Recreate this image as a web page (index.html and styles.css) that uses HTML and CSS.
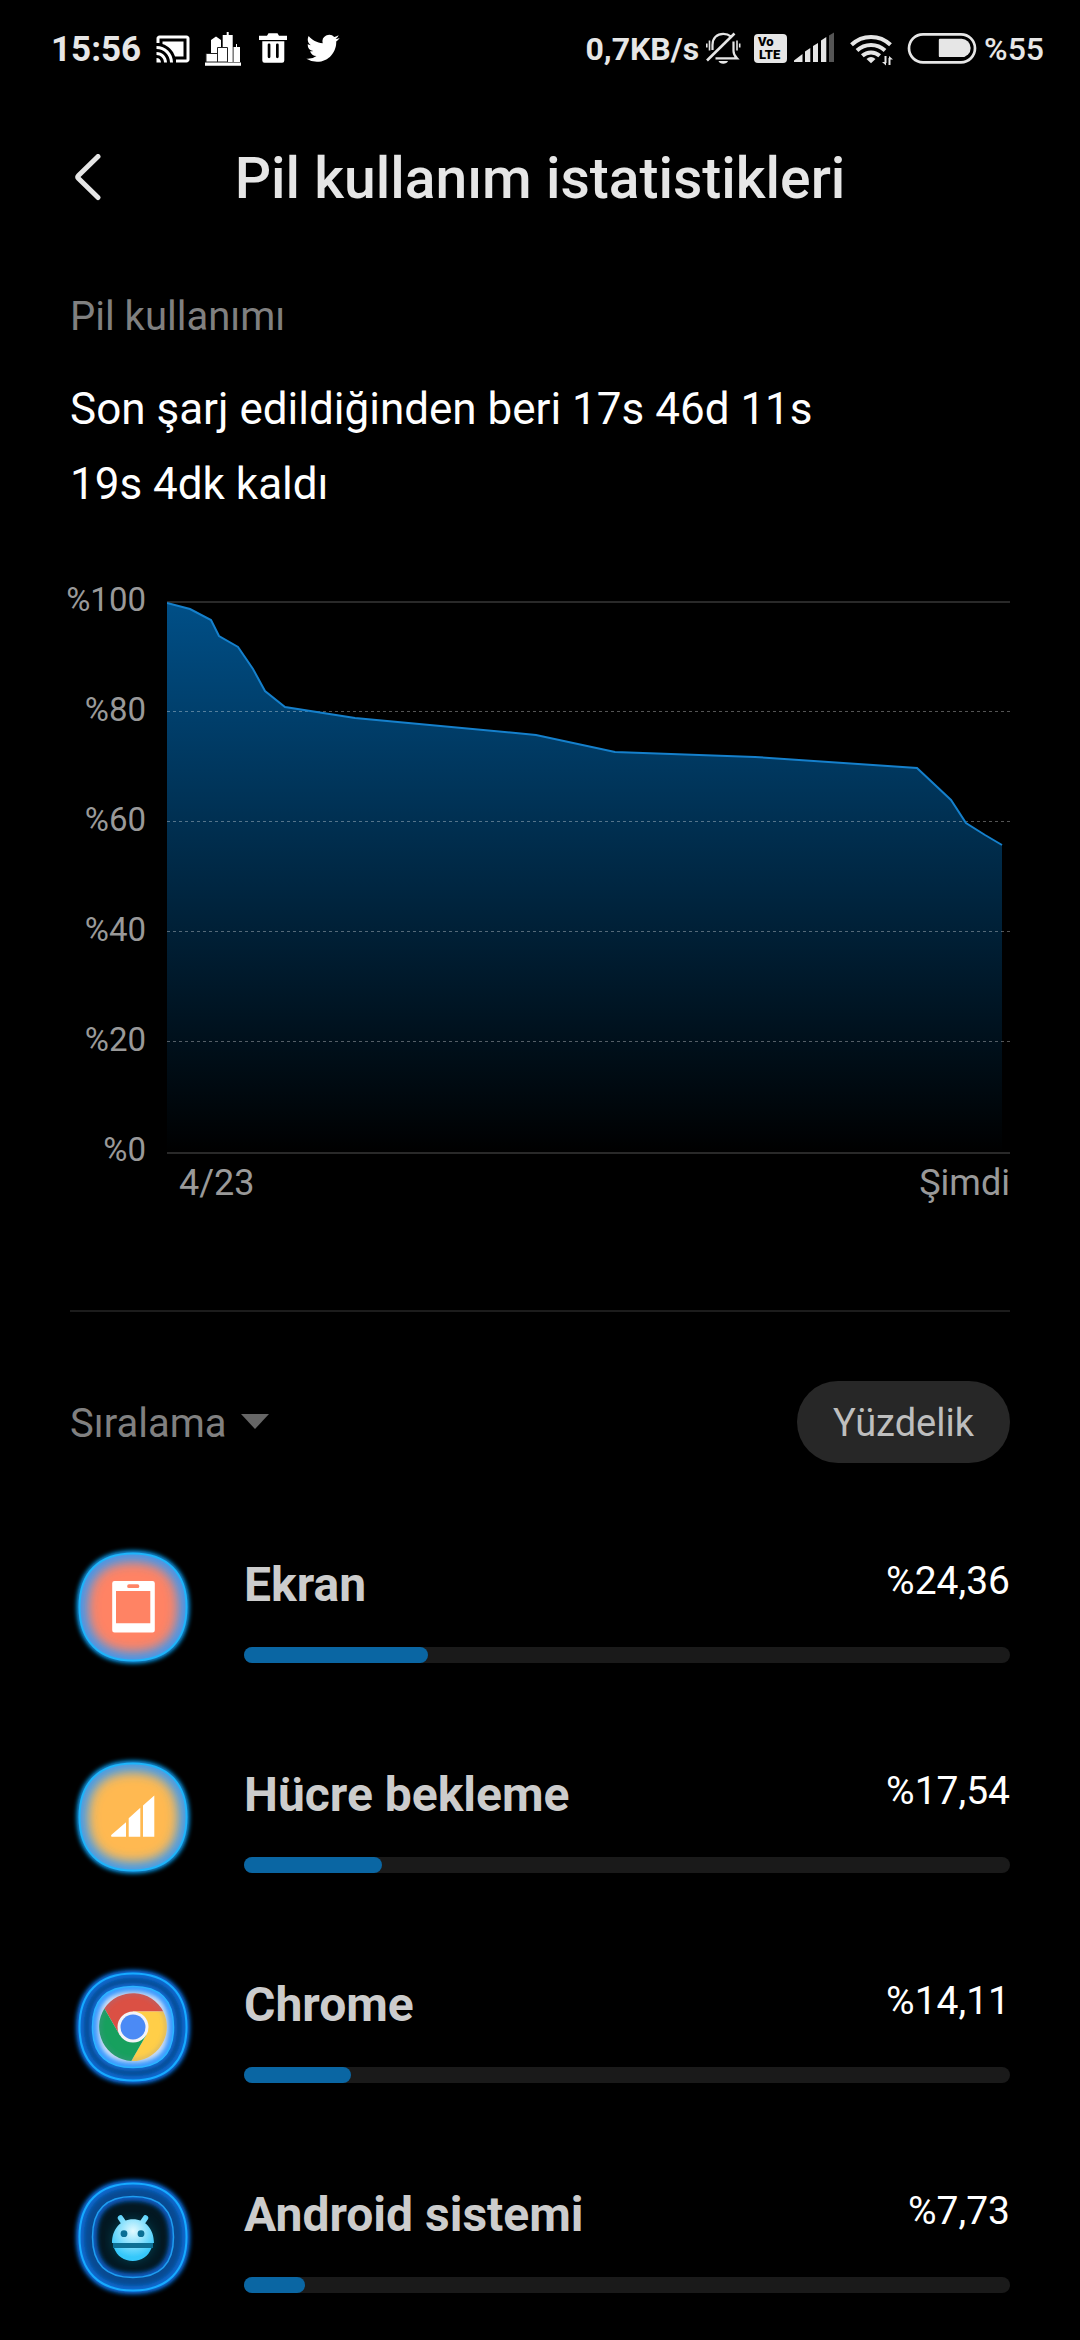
FILE: index.html
```html
<!DOCTYPE html>
<html lang="tr">
<head>
<meta charset="utf-8">
<meta name="viewport" content="width=device-width, initial-scale=1">
<title>Pil kullanım istatistikleri</title>
<link rel="stylesheet" href="styles.css">
</head>
<body>
<svg class="defs" width="0" height="0" aria-hidden="true">
  <defs>
    <path id="squircle" d="M63 9.500C97 9.500 116.500 29 116.500 63S97 116.500 63 116.500 9.500 97 9.500 63 29 9.500 63 9.500Z"/>
    <path id="squircle-inner" d="M63 22.500C90 22.500 103.500 36 103.500 63S90 103.500 63 103.500 22.500 90 22.500 63 36 22.500 63 22.500Z"/>
    <clipPath id="clip-outer"><use href="#squircle"/></clipPath>
    <clipPath id="clip-inner"><use href="#squircle-inner"/></clipPath>
    <filter id="blur-s" x="-20%" y="-20%" width="140%" height="140%"><feGaussianBlur stdDeviation="2"/></filter>
    <filter id="blur-m" x="-20%" y="-20%" width="140%" height="140%"><feGaussianBlur stdDeviation="6"/></filter>
    <radialGradient id="droid" gradientUnits="userSpaceOnUse" cx="63" cy="57" r="26">
      <stop offset="0" stop-color="#e2faff"/><stop offset="1" stop-color="#35c8fb"/>
    </radialGradient>
    <linearGradient id="area" gradientUnits="userSpaceOnUse" x1="0" y1="2" x2="0" y2="552">
      <stop offset="0" stop-color="#004f87"/><stop offset="1" stop-color="#000"/>
    </linearGradient>
  </defs>
</svg>

<header class="status">
  <div class="status-left">
    <span class="clock">15:56</span>
    <svg width="36" height="36" viewBox="0 0 24 24" fill="#fff"><path d="M1 18v3h3c0-1.66-1.34-3-3-3zm0-4v2c2.760 0 5 2.240 5 5h2c0-3.870-3.130-7-7-7zm18-7H5v1.630c3.960 1.280 7.090 4.410 8.370 8.370H19V7zM1 10v2c4.970 0 9 4.030 9 9h2c0-6.080-4.930-11-11-11zm20-7H3c-1.100 0-2 .9-2 2v3h2V5h18v14h-7v2h7c1.100 0 2-.9 2-2V5c0-1.100-.9-2-2-2z"/></svg>
    <svg width="36" height="36" viewBox="0 0 36 36" fill="#fff"><path d="M6 31V9l5-3.500L16 9v22zM17.700 31V4h4V1h2v3h4v27zM28.500 31V16h2.500v-3h1v3h3v15z"/><path d="M1 22.500h11.500V31H1zM12.500 16.500h10V31h-10z" stroke="#222" stroke-width="1"/><path d="M0 31.500h36v3.300H0z"/></svg>
    <svg width="36" height="36" viewBox="0 0 36 36" fill="#fff"><path fill-rule="evenodd" d="M13.500 2.300h9L24 4.700h8V9H4V4.700h8zM7.300 10.200h22v19.300a2.200 2.200 0 0 1-2.200 2.200H9.500a2.200 2.200 0 0 1-2.200-2.200zM14 12.500a1.300 1.300 0 0 0-1.300 1.300v12a1.300 1.300 0 0 0 2.700 0v-12A1.300 1.300 0 0 0 14 12.500zm8.300 0a1.300 1.300 0 0 0-1.300 1.300v12a1.300 1.300 0 0 0 2.700 0v-12a1.300 1.300 0 0 0-1.400-1.300z"/></svg>
    <svg width="36" height="36" viewBox="-1 -0.500 26 26" fill="#fff"><path d="M23.953 4.570a10 10 0 01-2.825.775 4.958 4.958 0 002.163-2.723c-.951.555-2.005.959-3.127 1.184a4.920 4.920 0 00-8.384 4.482C7.690 8.095 4.067 6.130 1.640 3.162a4.822 4.822 0 00-.666 2.475c0 1.710.870 3.213 2.188 4.096a4.904 4.904 0 01-2.228-.616v.060a4.923 4.923 0 003.946 4.827 4.996 4.996 0 01-2.212.085 4.936 4.936 0 004.604 3.417 9.867 9.867 0 01-6.102 2.105c-.39 0-.779-.023-1.170-.067a13.995 13.995 0 007.557 2.209c9.053 0 13.998-7.496 13.998-13.985 0-.21 0-.42-.015-.63A9.935 9.935 0 0024 4.590z"/></svg>
  </div>
  <div class="status-right">
    <span class="rate">0,7KB/s</span>
    <svg width="36" height="36" viewBox="0 0 36 36" fill="none" stroke="#e6e6e6" stroke-width="2.200"><path d="M7.500 19v-5C7.500 7 12 2.800 18.300 2.800c3 0 5.500.9 7.400 2.600M28.500 10.500V20c0 3 1.200 5 3.500 7.300H10.500"/><path d="M2 29.500 29.500 2.500" stroke-width="2.600"/><path d="M1.800 12.500v4M4.500 9.500v10M32 9.500v10M34.700 12.500v4" stroke-width="1.600"/><path d="M13.500 30h9.500a5 4 0 0 1-9.500 0z" fill="#e6e6e6" stroke="none"/></svg>
    <svg width="41" height="36" viewBox="0 0 41 36"><rect x="7" y="3" width="33" height="29" rx="4" fill="#e6e6e6"/><text x="11" y="15" class="volte">Vo</text><text x="12" y="28" class="volte">LTE</text></svg>
    <svg width="42" height="36" viewBox="0 0 42 36" fill="#e6e6e6"><path d="M0 31v-1.500L8.500 23v8zM11 31V20.500l5.300-3.500v14zM19 31V15l5-3v19zM27 31V9.500l5.300-3.500v25z"/><path fill="#555" d="M35 31V4.500l5-3V31z"/></svg>
    <svg width="58" height="36" viewBox="0 0 58 36" fill="none" stroke="#e6e6e6" stroke-width="4"><path d="M9.500 13.800a28 28 0 0 1 39 0M15 19.500a20.500 20.500 0 0 1 28 0M20.300 24.800a13 13 0 0 1 17.400 0"/><path d="M29 32.300 24.500 28q4.500-4 9 0z" fill="#e6e6e6" stroke="none"/><path d="M43.500 25v7M47.500 27v7" stroke-width="2"/><path d="M40 31h4v3.500zM51 28.500h-4V25z" fill="#e6e6e6" stroke="none"/></svg>
    <svg width="72" height="36" viewBox="0 0 72 36"><rect x="3" y="3.300" width="66" height="28" rx="14" fill="none" stroke="#e6e6e6" stroke-width="2.700"/><path fill="#e6e6e6" d="M34 7.700h21.500a9.200 9.200 0 0 1 0 18.400H34a1.200 1.200 0 0 1-1.200-1.200v-16A1.200 1.200 0 0 1 34 7.700z"/></svg>
    <span class="charge">%55</span>
  </div>
</header>

<nav class="titlebar">
  <button class="back" type="button" aria-label="Geri"><svg width="28" height="48" viewBox="0 0 28 48" fill="none" stroke="#e6e6e6" stroke-width="5" stroke-linecap="round" stroke-linejoin="round"><path d="M24 2.500 4.500 21.500q-1.500 1.500 0 3L24 43.500"/></svg></button>
  <h1 class="title">Pil kullanım istatistikleri</h1>
</nav>

<main class="content">
  <h2 class="section">Pil kullanımı</h2>
  <p class="summary">Son şarj edildiğinden beri 17s 46d 11s<br>19s 4dk kaldı</p>

  <figure class="chart">
    <div class="y-axis"><span>%100</span><span>%80</span><span>%60</span><span>%40</span><span>%20</span><span>%0</span></div>
    <div class="plot-col">
      <svg class="plot" viewBox="0 0 843 553" preserveAspectRatio="none" role="img" aria-label="Pil düzeyi">
        <path fill="#292929" d="M0 0h843v2H0zM0 551h843v2H0z"/>
        <path fill="url(#area)" d="M0 2 23 8 44 19 52 35 71 46 86 68 98 90 118 106 188 117 369 134 448 151 588 156 750 167 784 199 799 222 818 234 835 244V551H0z"/>
        <path fill="none" stroke="#fff" stroke-opacity=".33" stroke-dasharray="3 3" d="M0 110.500h843M0 220.500h843M0 330.500h843M0 440.500h843"/>
        <path fill="none" stroke="#1580cc" stroke-width="2" d="M0 2 23 8 44 19 52 35 71 46 86 68 98 90 118 106 188 117 369 134 448 151 588 156 750 167 784 199 799 222 818 234 835 244"/>
      </svg>
      <div class="x-axis"><span>4/23</span><span>Şimdi</span></div>
    </div>
  </figure>

  <hr class="divider">

  <div class="toolbar">
    <label class="sort">
      <select class="sort-select" aria-label="Sıralama"><option>Sıralama</option></select>
      <svg width="28" height="16" viewBox="0 0 28 16" fill="#666"><path d="M0 0h28L14 15z"/></svg>
    </label>
    <button class="mode" type="button">Yüzdelik</button>
  </div>

  <ul class="apps">
    <li class="app">
      <svg class="app-icon" viewBox="0 0 126 126">
        <use href="#squircle" fill="none" stroke="#0f9cf0" stroke-width="6" filter="url(#blur-s)"/>
        <g clip-path="url(#clip-outer)"><use href="#squircle" fill="#ff8364"/><use href="#squircle" fill="none" stroke="#3598f5" stroke-width="16" filter="url(#blur-m)"/></g>
        <use href="#squircle" fill="none" stroke="#1fb4fa" stroke-width="2"/>
        <path fill="#fff" fill-rule="evenodd" d="M44.500 37h38a2.300 2.300 0 0 1 2.300 2.300v47a2.300 2.300 0 0 1-2.300 2.300h-38a2.300 2.300 0 0 1-2.300-2.300v-47A2.300 2.300 0 0 1 44.500 37zM46 47v32.300h34.300V47zM59 40.300a1.800 1.800 0 0 0 0 3.700h8.500a1.800 1.800 0 0 0 0-3.700z"/>
      </svg>
      <div class="app-body">
        <div class="app-head"><span class="app-name">Ekran</span><span class="app-value">%24,36</span></div>
        <div class="bar"><div class="bar-fill" style="width:24%"></div></div>
      </div>
    </li>
    <li class="app">
      <svg class="app-icon" viewBox="0 0 126 126">
        <use href="#squircle" fill="none" stroke="#0f9cf0" stroke-width="6" filter="url(#blur-s)"/>
        <g clip-path="url(#clip-outer)"><use href="#squircle" fill="#ffb951"/><use href="#squircle" fill="none" stroke="#3598f5" stroke-width="16" filter="url(#blur-m)"/></g>
        <use href="#squircle" fill="none" stroke="#1fb4fa" stroke-width="2"/>
        <path fill="#fff" d="M41.500 82.700q-1-1 0-2L56 68.300v14.400zM58.700 82.700V64.300l11.600-10.600v29zM73 82.700V51.500l11.300-10v41.200z"/>
      </svg>
      <div class="app-body">
        <div class="app-head"><span class="app-name">Hücre bekleme</span><span class="app-value">%17,54</span></div>
        <div class="bar"><div class="bar-fill" style="width:18%"></div></div>
      </div>
    </li>
    <li class="app">
      <svg class="app-icon" viewBox="0 0 126 126">
        <use href="#squircle" fill="none" stroke="#0c74ea" stroke-width="7" filter="url(#blur-s)"/>
        <g clip-path="url(#clip-outer)"><use href="#squircle" fill="#084a92"/><use href="#squircle" fill="none" stroke="#0b6ad2" stroke-width="9" filter="url(#blur-s)"/><use href="#squircle-inner" fill="none" stroke="#1272e0" stroke-width="5" filter="url(#blur-s)"/></g>
        <g clip-path="url(#clip-inner)"><use href="#squircle-inner" fill="#e4efff"/><use href="#squircle-inner" fill="none" stroke="#3c9cff" stroke-width="11" filter="url(#blur-s)"/></g>
        <use href="#squircle" fill="none" stroke="#16aaff" stroke-width="2"/>
        <use href="#squircle-inner" fill="none" stroke="#2ab4ff" stroke-width="1.500"/>
        <path fill="#db5044" d="M34.400 44.500A34.300 34.300 0 0 1 93.300 47.500H63L49.600 70.800z"/>
        <path fill="#ffce48" d="M93.300 47.500A34.300 34.300 0 0 1 61.300 97L76.400 70.800 63 47.500z"/>
        <path fill="#17a05e" d="M61.300 97A34.300 34.300 0 0 1 34.400 44.500L49.600 70.800h26.800z"/>
        <circle cx="63" cy="63" r="33.500" fill="none" stroke="#6c84b0" stroke-opacity=".35" stroke-width="3" filter="url(#blur-s)"/>
        <circle cx="63" cy="63" r="15.500" fill="#f3f3f7"/><circle cx="63" cy="63" r="12.500" fill="#4b8af5"/>
      </svg>
      <div class="app-body">
        <div class="app-head"><span class="app-name">Chrome</span><span class="app-value">%14,11</span></div>
        <div class="bar"><div class="bar-fill" style="width:14%"></div></div>
      </div>
    </li>
    <li class="app">
      <svg class="app-icon" viewBox="0 0 126 126">
        <use href="#squircle" fill="none" stroke="#0c74ea" stroke-width="7" filter="url(#blur-s)"/>
        <g clip-path="url(#clip-outer)"><use href="#squircle" fill="#084a92"/><use href="#squircle" fill="none" stroke="#0b6ad2" stroke-width="9" filter="url(#blur-s)"/></g>
        <g clip-path="url(#clip-inner)"><use href="#squircle-inner" fill="#031822"/><use href="#squircle-inner" fill="none" stroke="#0b5cc0" stroke-width="9" filter="url(#blur-s)"/></g>
        <use href="#squircle" fill="none" stroke="#16aaff" stroke-width="2"/>
        <use href="#squircle-inner" fill="none" stroke="#1e9df0" stroke-width="1.500"/>
        <circle cx="63" cy="66" r="20" fill="#0f6d86" opacity=".6" filter="url(#blur-m)"/>
        <path fill="#0d6f94" d="M43 69h40v5H43z"/>
        <path stroke="url(#droid)" stroke-width="5.500" stroke-linecap="round" d="M50.500 44l5.500 8M75.500 44 70 52"/>
        <path fill="url(#droid)" d="M42 69c0-14 9-23.700 21-23.700S84 55 84 69zM44 74h37.500c-3 8-10 13-18.700 13S47 82 44 74z"/>
        <g fill="#0b6f95"><circle cx="54" cy="59.700" r="3.400"/><circle cx="71" cy="59.700" r="3.400"/></g>
      </svg>
      <div class="app-body">
        <div class="app-head"><span class="app-name">Android sistemi</span><span class="app-value">%7,73</span></div>
        <div class="bar"><div class="bar-fill" style="width:8%"></div></div>
      </div>
    </li>
  </ul>
</main>
</body>
</html>
```

FILE: styles.css
```css
* { box-sizing: border-box; }

body {
  margin: 0;
  background: #000;
  color: #fff;
  font-family: Roboto, "Noto Sans", sans-serif;
}

svg { display: block; flex: none; }
.defs { position: absolute; }

button, select {
  border: 0;
  padding: 0;
  background: none;
  color: inherit;
  font: inherit;
}

/* Status bar */
.status {
  display: flex;
  justify-content: space-between;
  height: 98px;
  padding: 0 36px 0 51px;
  color: #e6e6e6;
  font-size: 32px;
}
.status-left, .status-right { display: flex; align-items: center; }
.status-left { gap: 14px; }
.status-right { gap: 6px; }
.clock { font-size: 35px; font-weight: 700; }
.rate { font-weight: 700; }
.charge { font-weight: 500; }
.volte { font-size: 13px; font-weight: 900; fill: #000; }

/* Title bar */
.titlebar {
  display: grid;
  grid-template-columns: 48px 1fr 48px;
  align-items: center;
  height: 160px;
  padding: 0 74px;
}
.back { width: 48px; height: 48px; }
.title {
  margin: 0;
  color: #e6e6e6;
  font-size: 57px;
  font-weight: 500;
  text-align: center;
}

.content { padding: 31px 70px 0; }

.section {
  margin: 0 0 27px;
  color: #808080;
  font-size: 40px;
  font-weight: 400;
  line-height: 56px;
}
.summary {
  margin: 0 0 58px;
  font-size: 44px;
  line-height: 75px;
}

/* Battery level chart */
.chart {
  display: flex;
  gap: 21px;
  margin: 0 0 105px;
  color: #999;
}
.y-axis {
  display: flex;
  flex-direction: column;
  align-items: flex-end;
  gap: 70px;
  width: 76px;
  font-size: 33px;
  line-height: 40px;
}
.plot-col { flex: 1; padding-top: 21px; }
.plot { width: 100%; height: 553px; }
.x-axis {
  display: flex;
  justify-content: space-between;
  padding: 7px 0 0 12px;
  font-size: 36px;
  line-height: 44px;
}

.divider {
  height: 2px;
  margin: 0 0 69px;
  border: 0;
  background: #1c1c1c;
}

/* Sort and display mode */
.toolbar {
  display: flex;
  justify-content: space-between;
  align-items: center;
  margin-bottom: 39px;
}
.sort {
  display: flex;
  align-items: center;
  gap: 14px;
  color: #808080;
}
.sort-select {
  appearance: none;
  padding-top: 4px;
  font-size: 40px;
  line-height: 56px;
}
.mode {
  height: 82px;
  padding: 2px 36px 0;
  border-radius: 41px;
  background: #272727;
  color: #bebebe;
  font-size: 38px;
}

/* App list */
.apps { margin: 0; padding: 0; list-style: none; }
.app { display: flex; gap: 48px; padding: 42px 0; }
.app-icon { width: 126px; height: 126px; }
.app-body { flex: 1; padding-top: 11px; }
.app-head {
  display: flex;
  justify-content: space-between;
  align-items: flex-start;
  margin-bottom: 32px;
}
.app-name {
  color: #ccc;
  font-size: 48px;
  font-weight: 700;
  line-height: 60px;
}
.app-value { font-size: 39px; line-height: 52px; }
.bar {
  height: 16px;
  border-radius: 8px;
  background: #1a1a1a;
}
.bar-fill {
  height: 100%;
  border-radius: 8px;
  background: #0a66a3;
}
```
